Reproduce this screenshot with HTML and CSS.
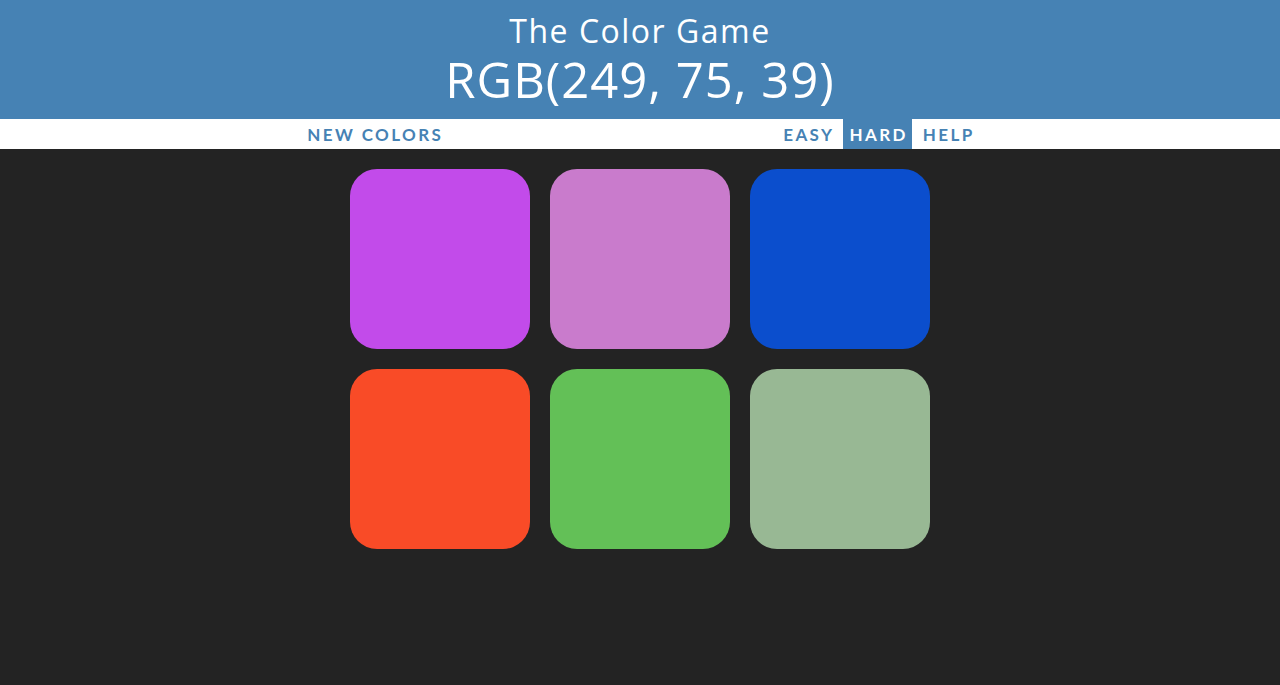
FILE: index.html
```html
<!DOCTYPE html>
<html>
<head>
<meta charset="utf-8">
<title>The Color Game</title>
<link rel="stylesheet" href="styles.css">
</head>
<body>
<header class="banner">
  <div class="title">The Color Game</div>
  <div class="rgb">RGB(249, 75, 39)</div>
</header>
<nav class="stripe">
  <button class="btn">New Colors</button>
  <span class="message"></span>
  <button class="btn">Easy</button>
  <button class="btn selected">Hard</button>
  <button class="btn">Help</button>
</nav>
<main class="board">
  <div class="square" style="background: rgb(194, 75, 234)"></div>
  <div class="square" style="background: rgb(201, 123, 204)"></div>
  <div class="square" style="background: rgb(11, 78, 205)"></div>
  <div class="square" style="background: rgb(249, 75, 39)"></div>
  <div class="square" style="background: rgb(99, 192, 87)"></div>
  <div class="square" style="background: rgb(152, 184, 148)"></div>
</main>
</body>
</html>
```
FILE: styles.css
```css
html, body {
  margin: 0;
  padding: 0;
}
body {
  background: #232323;
  font-family: "Open Sans", "Noto Sans", sans-serif;
  height: 685px;
  overflow: hidden;
}
.banner {
  background: steelblue;
  color: #fff;
  height: 119px;
  box-sizing: border-box;
  padding-top: 13px;
  text-align: center;
}
.title {
  font-size: 32px;
  line-height: 36px;
  font-weight: 400;
  letter-spacing: 1.5px;
}
.rgb {
  margin-top: 3px;
  font-size: 49px;
  line-height: 54px;
  font-weight: 400;
  letter-spacing: 1px;
}
.stripe {
  background: #fff;
  height: 30px;
  display: flex;
  justify-content: center;
  align-items: stretch;
  gap: 5px;
}
.message {
  width: 320px;
}
.btn {
  border: none;
  background: none;
  margin: 0;
  padding: 0 4px 0 6px;
  font-family: Lato, "Open Sans", sans-serif;
  font-weight: 700;
  font-size: 17px;
  letter-spacing: 2.4px;
  text-transform: uppercase;
  color: steelblue;
  outline: none;
}
.btn.selected {
  background: steelblue;
  color: #fff;
}
.board {
  width: 580px;
  margin: 20px auto 0;
  display: grid;
  grid-template-columns: repeat(3, 180px);
  gap: 20px;
}
.square {
  width: 180px;
  height: 180px;
  border-radius: 27px;
}
```
